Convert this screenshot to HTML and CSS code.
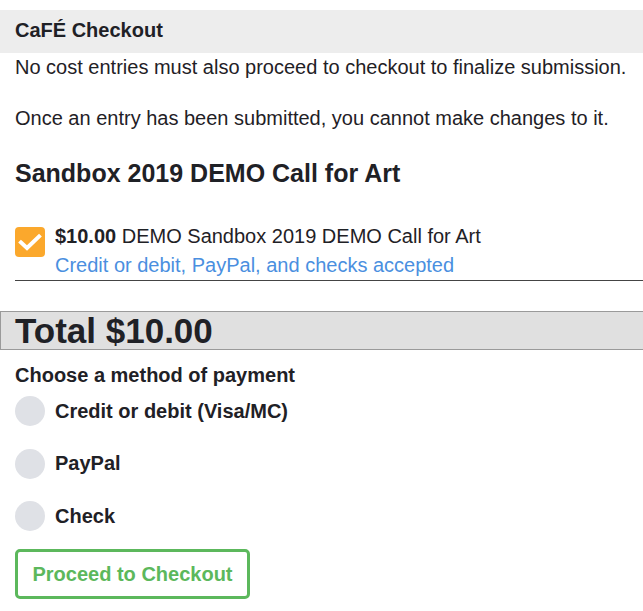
FILE: index.html
```html
<!DOCTYPE html>
<html>
<head>
<meta charset="utf-8">
<link rel="stylesheet" href="styles.css">
</head>
<body>
<div class="page">
  <div class="title-bar">CaFÉ Checkout</div>
  <div class="content">
    <p class="note first">No cost entries must also proceed to checkout to finalize submission.</p>
    <p class="note second">Once an entry has been submitted, you cannot make changes to it.</p>
    <h2 class="call-title">Sandbox 2019 DEMO Call for Art</h2>
    <div class="item">
      <span class="checkbox">
        <svg width="30" height="30" viewBox="0 0 30 30"><polyline points="6,15.5 12,21 24,9.5" fill="none" stroke="#fff" stroke-width="4" stroke-linecap="square" stroke-linejoin="miter"/></svg>
      </span>
      <div class="item-text">
        <div><strong>$10.00</strong> DEMO Sandbox 2019 DEMO Call for Art</div>
        <div class="accepted">Credit or debit, PayPal, and checks accepted</div>
      </div>
    </div>
  </div>
  <div class="total">Total $10.00</div>
  <div class="content">
    <div class="choose">Choose a method of payment</div>
    <div class="methods">
      <label class="method"><span class="radio"></span>Credit or debit (Visa/MC)</label>
      <label class="method"><span class="radio"></span>PayPal</label>
      <label class="method"><span class="radio"></span>Check</label>
    </div>
    <button class="proceed">Proceed to Checkout</button>
  </div>
</div>
</body>
</html>
```
FILE: styles.css
```css
html, body {
  margin: 0;
  padding: 0;
  background: #fff;
}
body {
  font-family: "Liberation Sans", Arial, sans-serif;
  font-size: 20px;
  color: #1f2126;
  overflow: hidden;
}
.page {
  padding-top: 10px;
}
.title-bar {
  background: #ededed;
  font-weight: bold;
  line-height: 23px;
  padding: 9px 15px 11px;
}
.content {
  padding-left: 15px;
}
.note {
  margin: 0;
  line-height: 23px;
}
.note.first {
  margin-top: 3px;
}
.note.second {
  margin-top: 28px;
}
.call-title {
  margin: 28px 0 0;
  font-size: 25px;
  line-height: 30px;
  font-weight: bold;
}
.item {
  margin-top: 34px;
  display: flex;
  align-items: flex-start;
  border-bottom: 1px solid #444;
  padding-bottom: 1px;
}
.checkbox {
  flex: none;
  width: 30px;
  height: 30px;
  margin-top: 5px;
  margin-right: 10px;
  background: #fba82c;
  border-radius: 4px;
  display: block;
}
.checkbox svg {
  display: block;
}
.item-text {
  line-height: 28.5px;
}
.accepted {
  color: #4a8fe0;
}
.total {
  margin-top: 30px;
  background: #e0e0e0;
  border: 1px solid #9a9a9a;
  border-right: none;
  font-size: 35px;
  font-weight: bold;
  line-height: 37px;
  padding-left: 14px;
}
.choose {
  margin-top: 14px;
  font-weight: bold;
  line-height: 23px;
}
.methods {
  margin-top: 9px;
  display: flex;
  flex-direction: column;
  gap: 22.5px;
}
.method {
  display: flex;
  align-items: center;
  font-weight: bold;
  height: 30px;
}
.radio {
  width: 30px;
  height: 30px;
  border-radius: 50%;
  background: #dfe1e6;
  margin-right: 10px;
  flex: none;
}
.proceed {
  margin-top: 18px;
  width: 235px;
  height: 50px;
  background: #fff;
  border: 3px solid #5cb85c;
  border-radius: 5px;
  color: #5cb85c;
  font-family: "Liberation Sans", Arial, sans-serif;
  font-size: 20px;
  font-weight: bold;
  padding: 0;
  display: block;
}
```
